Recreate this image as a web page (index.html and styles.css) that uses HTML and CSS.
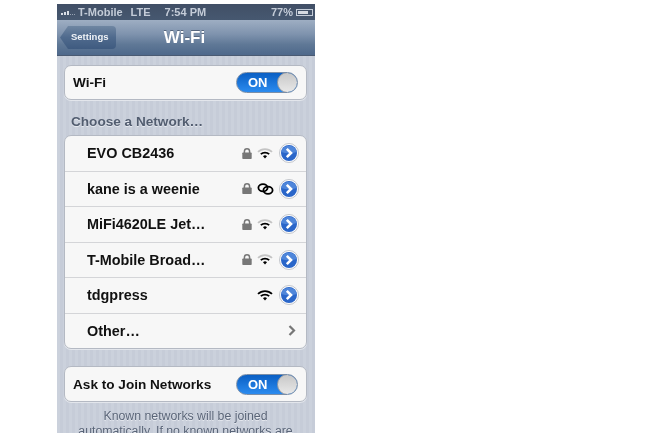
FILE: index.html
```html
<!DOCTYPE html>
<html lang="en">
<head>
<meta charset="utf-8">
<title>Wi-Fi</title>
<link rel="stylesheet" href="styles.css">
</head>
<body>
<svg class="defs" width="0" height="0" aria-hidden="true">
  <defs>
    <symbol id="lock" viewBox="0 0 10 11"><path d="M2.4 5V3.4a2.6 2.6 0 0 1 5.2 0V5" fill="none" stroke="#777" stroke-width="1.5"/><rect x="0.3" y="4.4" width="9.4" height="6.6" rx="0.8" fill="#777"/></symbol>
    <symbol id="wifi-weak" viewBox="0 0 16 11"><path d="M1 3.9a10 10 0 0 1 14 0" fill="none" stroke="#c4c4c4" stroke-width="1.8"/><path d="M3.8 6.2a6.2 6.2 0 0 1 8.4 0" fill="none" stroke="#000" stroke-width="1.8"/><path d="M6 8.3a2.8 2.8 0 0 1 4 0L8 10.4z" fill="#000"/></symbol>
    <symbol id="wifi-full" viewBox="0 0 16 11"><path d="M1 3.9a10 10 0 0 1 14 0" fill="none" stroke="#000" stroke-width="1.8"/><path d="M3.8 6.2a6.2 6.2 0 0 1 8.4 0" fill="none" stroke="#000" stroke-width="1.8"/><path d="M6 8.3a2.8 2.8 0 0 1 4 0L8 10.4z" fill="#000"/></symbol>
    <symbol id="link" viewBox="0 0 17 12"><ellipse cx="6" cy="4.8" rx="4.6" ry="3.6" fill="none" stroke="#000" stroke-width="1.8"/><ellipse cx="11" cy="7.2" rx="4.6" ry="3.6" fill="none" stroke="#000" stroke-width="1.8"/></symbol>
    <symbol id="disc" viewBox="0 0 20 20"><circle cx="10" cy="10" r="9.5" fill="#fff" stroke="#b4b8bf" stroke-width="0.8"/><circle cx="10" cy="10" r="8" fill="#2a66c9"/><path d="M2.2 9a8 8 0 0 1 15.6 0q-7.8 2.4-15.6 0z" fill="#4f86da"/><path d="M7.8 5.9 12 10l-4.2 4.1" fill="none" stroke="#fff" stroke-width="2.6"/></symbol>
  </defs>
</svg>
<main class="phone">
  <div class="status">
    <span class="signal"><i class="b b1"></i><i class="b b2"></i><i class="b b3"></i><i class="d"></i><i class="d"></i><i class="d"></i></span>
    <span class="carrier">T-Mobile</span>
    <span class="lte">LTE</span>
    <span class="time">7:54 PM</span>
    <span class="pct">77%</span>
    <span class="battery"><span class="level"></span></span>
  </div>
  <header class="nav">
    <span class="back">Settings</span>
    <h1 class="title">Wi-Fi</h1>
  </header>
  <div class="content">
    <section class="card single">
      <span class="label">Wi-Fi</span>
      <span class="switch"><span class="on">ON</span><span class="knob"></span></span>
    </section>
    <h2 class="section">Choose a Network…</h2>
    <section class="card list">
      <div class="row"><span class="name">EVO CB2436</span><svg class="lock"><use href="#lock"/></svg><svg class="sig"><use href="#wifi-weak"/></svg><svg class="disc"><use href="#disc"/></svg></div>
      <div class="row"><span class="name">kane is a weenie</span><svg class="lock"><use href="#lock"/></svg><svg class="sig link"><use href="#link"/></svg><svg class="disc"><use href="#disc"/></svg></div>
      <div class="row"><span class="name">MiFi4620LE Jet…</span><svg class="lock"><use href="#lock"/></svg><svg class="sig"><use href="#wifi-weak"/></svg><svg class="disc"><use href="#disc"/></svg></div>
      <div class="row"><span class="name">T-Mobile Broad…</span><svg class="lock"><use href="#lock"/></svg><svg class="sig"><use href="#wifi-weak"/></svg><svg class="disc"><use href="#disc"/></svg></div>
      <div class="row"><span class="name">tdgpress</span><svg class="sig"><use href="#wifi-full"/></svg><svg class="disc"><use href="#disc"/></svg></div>
      <div class="row"><span class="name">Other…</span><svg class="chev" viewBox="0 0 8 11"><path d="M1.5 1 6 5.5 1.5 10" fill="none" stroke="#777" stroke-width="2.2"/></svg></div>
    </section>
    <section class="card single ask">
      <span class="label">Ask to Join Networks</span>
      <span class="switch"><span class="on">ON</span><span class="knob"></span></span>
    </section>
    <p class="note">Known networks will be joined automatically. If no known networks are</p>
  </div>
</main>
</body>
</html>
```
FILE: styles.css
```css
* { box-sizing: border-box; }
html, body { margin: 0; padding: 0; background: #fff; }
body { height: 433px; overflow: hidden; font-family: "Liberation Sans", Arial, sans-serif; }
.defs { display: block; height: 0; }
.phone { width: 258px; height: 429px; margin: 4px 0 0 57px; overflow: hidden; display: flex; flex-direction: column; filter: blur(0.45px); }

.status { height: 16px; flex: none; background: linear-gradient(#414f66, #465870); color: #c4ccd8; font-size: 11px; font-weight: 700; display: flex; align-items: center; padding: 0 2px 0 4px; }
.signal { display: flex; align-items: flex-end; gap: 1px; width: 16px; height: 6px; }
.b { display: block; width: 2px; background: #d8dde5; }
.b1 { height: 2px; } .b2 { height: 3px; } .b3 { height: 4px; }
.d { display: block; width: 1px; height: 1px; background: #98a3b4; }
.carrier { margin-left: 1px; }
.lte { margin-left: 8px; }
.time { margin-left: 14px; }
.pct { margin-left: auto; }
.battery { width: 17px; height: 7px; margin-left: 3px; border: 1px solid #c4ccd8; padding: 1px; display: block; }
.level { display: block; width: 77%; height: 100%; background: #d5dae2; }

.nav { height: 36px; flex: none; background: linear-gradient(#9eaec3 0, #7f93ae 40%, #5f7896 70%, #4e688b 100%); border-bottom: 1px solid #4a5a72; display: flex; align-items: center; justify-content: center; position: relative; }
.title { margin: 0 3px 0 0; color: #fff; font-size: 17px; font-weight: 700; text-shadow: 0 -1px 0 #56667d; }
.back { position: absolute; left: 3px; top: 6px; width: 56px; height: 23px; padding-left: 11px; line-height: 22px; font-size: 9.5px; font-weight: 700; color: #f0f3f7; background: linear-gradient(#6f86a2, #4f6a8d 50%, #3f5b80); border-radius: 0 4px 4px 0; clip-path: polygon(0 50%, 8px 0, 100% 0, 100% 100%, 8px 100%); }

.content { flex: 1; min-height: 0; padding: 9px 8px 0 7px; background-color: #c9cfdb; background-image: repeating-linear-gradient(90deg, #cbd1dc 0 3px, #c6ccd8 3px 6px); }
.card { background: #f7f7f7; border: 1px solid #b4b9c3; border-radius: 7px; box-shadow: 0 1px 0 #e3e6ec; }
.single { height: 35px; display: flex; align-items: center; justify-content: space-between; padding: 0 8px 0 8px; }
.label { font-size: 13.6px; font-weight: 700; color: #111; }
.switch { width: 62px; height: 21px; border-radius: 11px; background: linear-gradient(#0a5fc4, #2b8bef); border: 1px solid #7a8ea8; position: relative; display: block; overflow: hidden; }
.on { position: absolute; left: 11px; top: 3px; font-size: 13px; line-height: 14px; font-weight: 700; color: #fff; }
.knob { position: absolute; right: -1px; top: -1px; width: 21px; height: 21px; border-radius: 50%; background: linear-gradient(#c8c8c8, #e8e8e8); border: 1px solid #9a9ca0; }

.section { margin: 14px 0 0 7px; height: 23px; font-size: 13.6px; line-height: 16px; font-weight: 700; color: #525d70; text-shadow: 0 1px 0 #e6e9ef; }

.list { height: 214px; margin-top: -2px; overflow: hidden; display: flex; flex-direction: column; }
.row { flex: 1; display: flex; align-items: center; padding: 0 7px 0 22px; border-top: 1px solid #d4d5d8; }
.row:first-child { border-top: 0; }
.name { font-size: 14.4px; font-weight: 700; color: #111; margin-right: auto; }
.lock { width: 10px; height: 11px; flex: none; margin-right: 5px; }
.sig { width: 16px; height: 11px; flex: none; margin-right: 6px; }
.link { width: 17px; height: 12px; margin-right: 5px; }
.disc { width: 20px; height: 20px; flex: none; }
.chev { width: 8px; height: 11px; flex: none; margin-right: 3px; }

.ask { margin-top: 17px; height: 36px; }
.note { margin: 7px 6px 0; font-size: 12.3px; line-height: 15px; text-align: center; color: #5a6578; text-shadow: 0 1px 0 #e6e9ef; }
```
